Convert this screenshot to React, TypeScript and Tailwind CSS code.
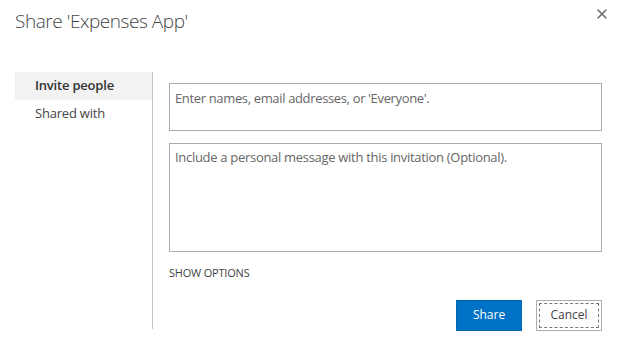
import { X } from 'lucide-react';

const font = { fontFamily: '"Open Sans", "Noto Sans", sans-serif' };

export default function App() {
  return (
    <div className="w-[619px] h-[352px] bg-white relative text-[#444]" style={font}>
      <button className="absolute top-[6px] right-[9px] text-[#666]">
        <X size={16} strokeWidth={2.2} />
      </button>
      <h1 className="pl-[15px] pt-[9px] text-[19px] font-light leading-[24px] text-[#444] tracking-[-0.45px]">
        Share 'Expenses App'
      </h1>

      <div className="flex mt-[39px] pl-[15px]">
        <nav className="w-[137px] flex flex-col">
          <div className="h-[28px] bg-[#f2f2f2] pl-[20px] flex items-center text-[13px] font-semibold text-[#333] tracking-[-0.2px]">
            Invite people
          </div>
          <div className="h-[27px] pl-[20px] flex items-center text-[13px] text-[#444] tracking-[-0.2px]">
            Shared with
          </div>
        </nav>
        <div className="w-px bg-[#c6c6c6] h-[257px]" />

        <div className="flex-1 pl-[16px] pr-[17px] pt-[11px] flex flex-col">
          <div className="h-[48px] border border-[#ababab] px-[5px] pt-[5px] text-[13px] text-[#666] tracking-[-0.35px]">
            Enter names, email addresses, or 'Everyone'.
          </div>
          <div className="h-[109px] mt-[12px] border border-[#ababab] px-[5px] pt-[4px] text-[13px] text-[#666] tracking-[-0.3px]">
            Include a personal message with this invitation (Optional).
          </div>
          <div className="mt-[13px] text-[11px] text-[#444] tracking-[-0.2px]">SHOW OPTIONS</div>
          <div className="flex justify-end gap-[14px] mt-[18px]">
            <button className="w-[66px] h-[31px] bg-[#0072c6] text-white text-[12px] border border-[#0067b0]">
              Share
            </button>
            <button className="w-[66px] h-[31px] bg-[#fdfdfd] border border-[#ababab] p-[2px] text-[12px] text-[#444]">
              <span className="flex items-center justify-center w-full h-full border border-dashed border-[#777]">
                Cancel
              </span>
            </button>
          </div>
        </div>
      </div>
    </div>
  );
}
